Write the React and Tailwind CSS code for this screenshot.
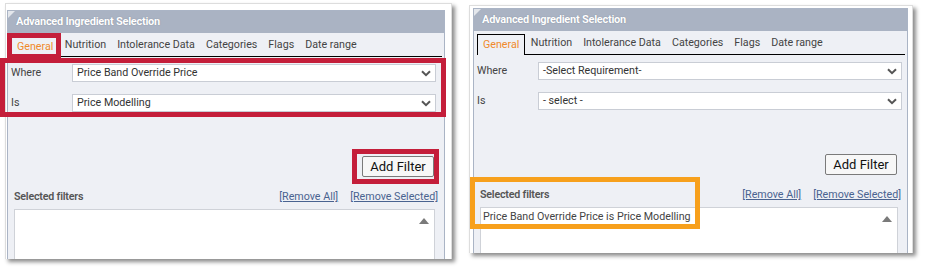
import React from 'react';

const TABS = ['General', 'Nutrition', 'Intolerance Data', 'Categories', 'Flags', 'Date range'];

function Chevron() {
  return (
    <svg width="10" height="7" viewBox="0 0 10 7" className="shrink-0">
      <path d="M1 1.2 L5 5.2 L9 1.2" stroke="#555" strokeWidth="2" fill="none" />
    </svg>
  );
}

function Select({ value }) {
  return (
    <div className="flex items-center justify-between h-[18px] w-[364px] bg-white border border-[#c9cdd5] pl-[4px] pr-[4px] text-[10.7px] text-[#333]">
      <span>{value}</span>
      <Chevron />
    </div>
  );
}

function Panel({ where, is, selected }) {
  return (
    <div className="flex-1 flex flex-col bg-[#eef0f5] border-x border-t border-[#aab4c5]">
      {/* header */}
      <div className="relative h-[22px] bg-[#aab3c3] flex items-center pl-[8px]">
        <svg width="7" height="7" viewBox="0 0 7 7" className="absolute left-0 top-0">
          <polygon points="0,0 7,0 0,7" fill="#e4e7ec" />
        </svg>
        <span className="text-[11px] font-bold text-white tracking-[-0.25px] [text-shadow:0_0_1px_rgba(80,90,110,0.6)]">
          Advanced Ingredient Selection
        </span>
      </div>

      {/* tabs */}
      <div className="flex items-end h-[24px] ml-[3px] mr-[2px] border-b border-black">
        {TABS.map((t, i) => (
          <div
            key={t}
            className={
              i === 0
                ? 'h-[21px] -mb-px flex items-center px-[5px] border border-b-0 border-black bg-[#eef0f5] text-[10.7px] text-[#f08a2c]'
                : 'h-[21px] flex items-center px-[4.5px] border border-transparent text-[10.7px] text-[#444]'
            }
          >
            {t}
          </div>
        ))}
      </div>

      {/* where / is */}
      <div className="flex flex-col gap-[12px] pt-[7px] pl-[3px]">
        <div className="flex items-center">
          <span className="w-[61px] text-[10.7px] text-[#444]">Where</span>
          <Select value={where} />
        </div>
        <div className="flex items-center">
          <span className="w-[61px] text-[10.7px] text-[#444]">Is</span>
          <Select value={is} />
        </div>
      </div>

      {/* add filter */}
      <div className="flex justify-end pr-[10px] mt-[44px]">
        <button className="h-[21px] w-[72px] rounded-[2px] border border-[#7a7a7a] bg-[#f7f7f7] text-[13px] text-[#111] leading-none">
          Add Filter
        </button>
      </div>

      {/* selected filters */}
      <div className="flex items-center justify-between pl-[6px] pr-[6px] mt-[13px] h-[14px]">
        <span className="text-[10.7px] font-semibold text-[#555] tracking-[-0.2px]">Selected filters</span>
        <div className="flex gap-[12px] text-[10.7px] text-[#4a6390]">
          <span className="underline">[Remove All]</span>
          <span className="underline">[Remove Selected]</span>
        </div>
      </div>

      <div className="flex-1 mt-[5px] ml-[6px] mr-[9px] bg-white border-x border-t border-[#cfd2d8] flex items-start justify-between pl-[2px] pt-[1px] pr-[5px]">
        <span className="text-[10.7px] text-[#444]">{selected}</span>
        <svg width="10" height="6" viewBox="0 0 10 6" className="mt-[7px]">
          <polygon points="5,0 10,6 0,6" fill="#7a7a7a" />
        </svg>
      </div>
    </div>
  );
}

export default function App() {
  return (
    <div className="relative w-[925px] h-[268px] bg-white flex items-start font-['Roboto',sans-serif]">
      {/* left card */}
      <div className="ml-[5px] mt-[3px] w-[447px] h-[256px] flex flex-col bg-white border border-[#dddddd] border-b-0 pt-[6px] pl-px pr-[6px] shadow-[3px_3px_4px_rgba(0,0,0,0.45)]">
        <Panel where="Price Band Override Price" is="Price Modelling" selected="" />
      </div>

      {/* right card */}
      <div className="ml-[17px] mt-[5px] w-[444px] h-[248px] flex flex-col bg-white border border-[#dddddd] border-b-0 pt-[2px] pl-[3px] pr-[4px] shadow-[3px_3px_4px_rgba(0,0,0,0.45)]">
        <Panel where="-Select Requirement-" is="- select -" selected="Price Band Override Price is Price Modelling" />
      </div>

      {/* annotations */}
      <div className="absolute left-[7px] top-[33px] w-[54px] h-[26px] border-[5px] border-[#c41e3a]" />
      <div className="absolute left-0 top-[58px] w-[446px] h-[59px] border-[5px] border-[#c41e3a]" />
      <div className="absolute left-[352px] top-[149px] w-[87px] h-[35px] border-[5px] border-[#c41e3a]" />
      <div className="absolute left-[470px] top-[177px] w-[230px] h-[52px] border-[5px] border-[#f7a01c]" />
    </div>
  );
}
